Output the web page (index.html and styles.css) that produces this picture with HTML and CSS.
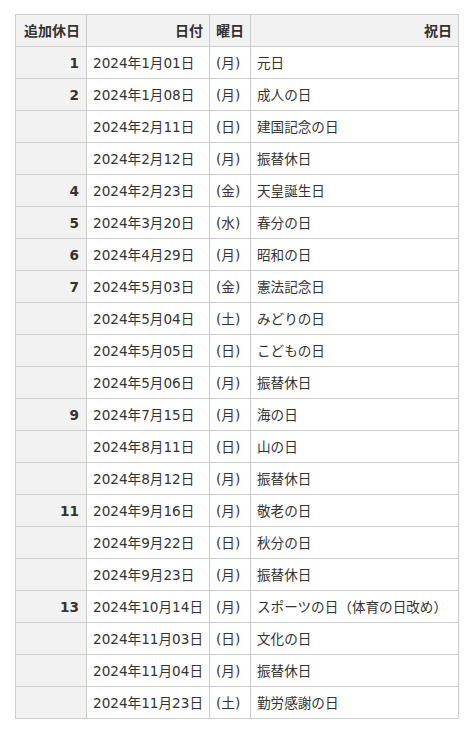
FILE: index.html
```html
<!DOCTYPE html>
<html lang="ja">
<head>
<meta charset="utf-8">
<link rel="stylesheet" href="styles.css">
</head>
<body>
<table class="holidays">
  <colgroup>
    <col class="c-num"><col class="c-date"><col class="c-dow"><col class="c-name">
  </colgroup>
  <thead>
    <tr><th class="r">追加休日</th><th class="r">日付</th><th>曜日</th><th class="r">祝日</th></tr>
  </thead>
  <tbody>
    <tr><th class="num">1</th><td>2024年1月01日</td><td>(月)</td><td>元日</td></tr>
    <tr><th class="num">2</th><td>2024年1月08日</td><td>(月)</td><td>成人の日</td></tr>
    <tr><th class="num"></th><td>2024年2月11日</td><td>(日)</td><td>建国記念の日</td></tr>
    <tr><th class="num"></th><td>2024年2月12日</td><td>(月)</td><td>振替休日</td></tr>
    <tr><th class="num">4</th><td>2024年2月23日</td><td>(金)</td><td>天皇誕生日</td></tr>
    <tr><th class="num">5</th><td>2024年3月20日</td><td>(水)</td><td>春分の日</td></tr>
    <tr><th class="num">6</th><td>2024年4月29日</td><td>(月)</td><td>昭和の日</td></tr>
    <tr><th class="num">7</th><td>2024年5月03日</td><td>(金)</td><td>憲法記念日</td></tr>
    <tr><th class="num"></th><td>2024年5月04日</td><td>(土)</td><td>みどりの日</td></tr>
    <tr><th class="num"></th><td>2024年5月05日</td><td>(日)</td><td>こどもの日</td></tr>
    <tr><th class="num"></th><td>2024年5月06日</td><td>(月)</td><td>振替休日</td></tr>
    <tr><th class="num">9</th><td>2024年7月15日</td><td>(月)</td><td>海の日</td></tr>
    <tr><th class="num"></th><td>2024年8月11日</td><td>(日)</td><td>山の日</td></tr>
    <tr><th class="num"></th><td>2024年8月12日</td><td>(月)</td><td>振替休日</td></tr>
    <tr><th class="num">11</th><td>2024年9月16日</td><td>(月)</td><td>敬老の日</td></tr>
    <tr><th class="num"></th><td>2024年9月22日</td><td>(日)</td><td>秋分の日</td></tr>
    <tr><th class="num"></th><td>2024年9月23日</td><td>(月)</td><td>振替休日</td></tr>
    <tr><th class="num">13</th><td>2024年10月14日</td><td>(月)</td><td>スポーツの日（体育の日改め）</td></tr>
    <tr><th class="num"></th><td>2024年11月03日</td><td>(日)</td><td>文化の日</td></tr>
    <tr><th class="num"></th><td>2024年11月04日</td><td>(月)</td><td>振替休日</td></tr>
    <tr><th class="num"></th><td>2024年11月23日</td><td>(土)</td><td>勤労感謝の日</td></tr>
  </tbody>
</table>
</body>
</html>
```

FILE: styles.css
```css
html, body {
  margin: 0;
  padding: 0;
  background: #fff;
}
body {
  padding: 14px 0 0 15px;
  font-family: "DejaVu Sans", "Noto Sans CJK JP", sans-serif;
  font-size: 13.6px;
  color: #333;
}
.holidays {
  border-collapse: collapse;
  table-layout: fixed;
  width: 443px;
}
.c-num { width: 71px; }
.c-date { width: 123px; }
.c-dow { width: 41px; }
.c-name { width: 208px; }
.holidays th,
.holidays td {
  border: 1px solid #ccc;
  height: 32px;
  padding: 0 6px;
  box-sizing: border-box;
  white-space: nowrap;
  line-height: 20px;
}
.holidays td {
  text-align: left;
  font-weight: normal;
}
.holidays thead th {
  background: #f2f2f2;
  font-weight: bold;
  text-align: left;
  font-size: 14px;
}
.holidays thead th.r {
  text-align: right;
}
.holidays th.num {
  background: #f2f2f2;
  text-align: right;
  font-weight: bold;
  padding-right: 7px;
}
```
